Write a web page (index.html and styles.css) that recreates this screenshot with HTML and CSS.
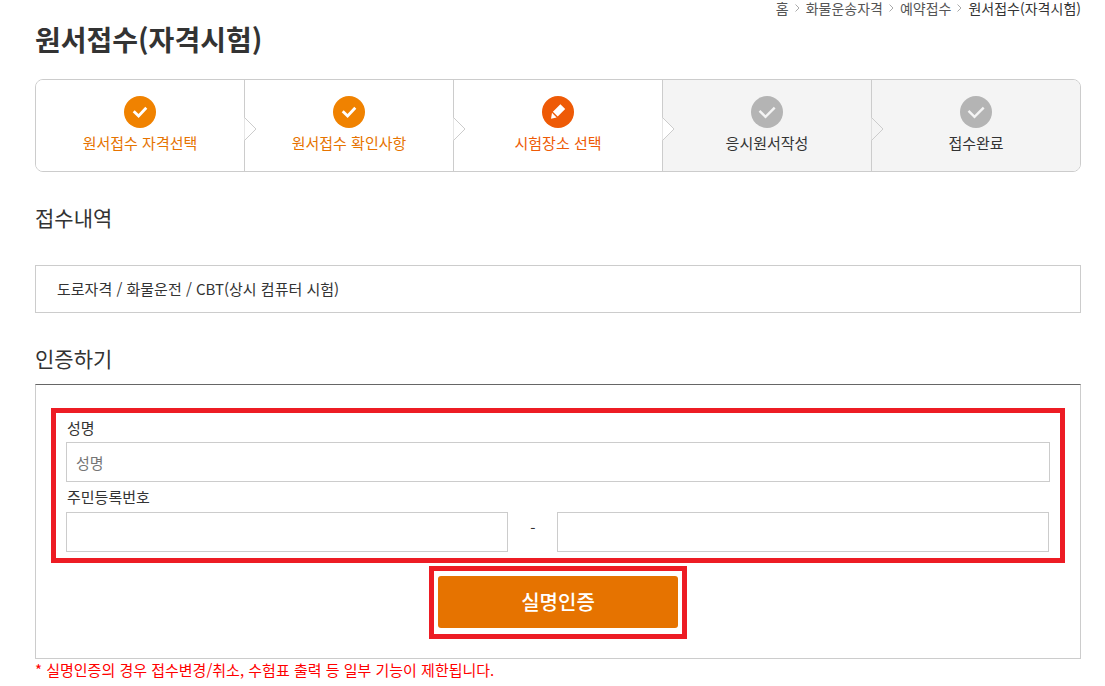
FILE: index.html
```
<!DOCTYPE html>
<html lang="ko">

<head>
    <meta charset="utf-8">
    <title>원서접수(자격시험)</title>
    <link rel="stylesheet" href="styles.css">
</head>

<body>
    <div class="container">
        <nav class="location">
            <a href="#">홈</a>
            <svg viewBox="0 0 5 8"><path d="M.5 .5L4 4L.5 7.5" /></svg>
            <a href="#">화물운송자격</a>
            <svg viewBox="0 0 5 8"><path d="M.5 .5L4 4L.5 7.5" /></svg>
            <a href="#">예약접수</a>
            <svg viewBox="0 0 5 8"><path d="M.5 .5L4 4L.5 7.5" /></svg>
            <a href="#" class="current">원서접수(자격시험)</a>
        </nav>

        <h1>원서접수(자격시험)</h1>

        <ol class="steps">
            <li class="done">
                <svg class="icon" viewBox="0 0 32 32"><circle cx="16" cy="16" r="16" /><path d="M9.7 15.2L14.6 20L22.3 11.8" /></svg>
                <span>원서접수 자격선택</span>
                <svg class="arrow" viewBox="0 0 13 24"><path d="M.5 .5L12 12L.5 23.5" /></svg>
            </li>
            <li class="done">
                <svg class="icon" viewBox="0 0 32 32"><circle cx="16" cy="16" r="16" /><path d="M9.7 15.2L14.6 20L22.3 11.8" /></svg>
                <span>원서접수 확인사항</span>
                <svg class="arrow" viewBox="0 0 13 24"><path d="M.5 .5L12 12L.5 23.5" /></svg>
            </li>
            <li class="on">
                <svg class="icon" viewBox="0 0 32 32"><circle cx="16" cy="16" r="16" /><path class="pen" d="M18.4 8.2L23.2 13L15.7 20.4L10.9 15.7ZM10 16.8L14.6 21.4L9 22.8Z" /></svg>
                <span>시험장소 선택</span>
                <svg class="arrow" viewBox="0 0 13 24"><path d="M.5 .5L12 12L.5 23.5" /></svg>
            </li>
            <li>
                <svg class="icon" viewBox="0 0 32 32"><circle cx="16" cy="16" r="16" /><path d="M8.5 14.8L14.5 20.8L23.7 11.6" /></svg>
                <span>응시원서작성</span>
                <svg class="arrow" viewBox="0 0 13 24"><path d="M.5 .5L12 12L.5 23.5" /></svg>
            </li>
            <li>
                <svg class="icon" viewBox="0 0 32 32"><circle cx="16" cy="16" r="16" /><path d="M8.5 14.8L14.5 20.8L23.7 11.6" /></svg>
                <span>접수완료</span>
            </li>
        </ol>

        <h2>접수내역</h2>
        <p class="summary">도로자격 / 화물운전 / CBT(상시 컴퓨터 시험)</p>

        <h2>인증하기</h2>
        <form class="certify">
            <div class="fields">
                <label for="name">성명</label>
                <input type="text" id="name" placeholder="성명">
                <label for="jumin1">주민등록번호</label>
                <div class="jumin">
                    <input type="text" id="jumin1" maxlength="6">
                    <span>-</span>
                    <input type="password" id="jumin2" maxlength="7" aria-label="주민등록번호 뒷자리">
                </div>
            </div>
            <div class="submit">
                <button type="submit">실명인증</button>
            </div>
        </form>
        <p class="notice">* 실명인증의 경우 접수변경/취소, 수험표 출력 등 일부 기능이 제한됩니다.</p>
    </div>
</body>

</html>
```
FILE: styles.css
```
* {
    box-sizing: border-box;
}

body {
    margin: 0;
    background: #fff;
    color: #333;
    font-family: 'Noto Sans CJK KR', sans-serif;
    font-size: 15px;
    line-height: 24px;
}

h1,
h2,
p,
ol {
    margin: 0;
    padding: 0;
}

.container {
    padding: 0 24px 0 35px;
}

.location {
    display: flex;
    justify-content: flex-end;
    align-items: center;
    gap: 6px;
    height: 16px;
    font-size: 14px;
}

.location a {
    color: #555;
    text-decoration: none;
}

.location a.current {
    color: #333;
}

.location svg {
    width: 5px;
    height: 8px;
    fill: none;
    stroke: #aaa;
}

h1 {
    font-size: 28px;
    line-height: 46px;
    font-weight: 700;
}

/* 진행 단계 */
.steps {
    display: flex;
    margin: 17px 0 23px;
    list-style: none;
    border: 1px solid #ccc;
    border-radius: 8px;
}

.steps li {
    position: relative;
    flex: 1;
    display: flex;
    flex-direction: column;
    align-items: center;
    gap: 3px;
    padding: 16px 0;
    background: #f4f4f4;
    border-right: 1px solid #ccc;
}

.steps li:first-child {
    border-radius: 7px 0 0 7px;
}

.steps li:last-child {
    border-right: none;
    border-radius: 0 7px 7px 0;
}

.steps .done,
.steps .on {
    background: #fff;
}

.steps .done {
    color: #e67300;
}

.steps .on {
    color: #ee5a06;
}

.icon {
    width: 32px;
    height: 32px;
}

.icon circle {
    fill: #b4b4b4;
}

.icon path {
    fill: none;
    stroke: #f4f4f4;
    stroke-width: 2.4;
}

.done .icon circle {
    fill: #f08200;
}

.done .icon path {
    stroke: #fff;
    stroke-width: 2.8;
}

.on .icon circle {
    fill: #ee5a06;
}

.icon .pen {
    fill: #fff;
    stroke: none;
}

/* 구분선 위에 겹치는 화살표 */
.arrow {
    position: absolute;
    top: 37px;
    right: -13px;
    z-index: 1;
    width: 13px;
    height: 24px;
    fill: #fff;
    stroke: #ccc;
}

.steps li:nth-child(4) .arrow {
    fill: #f4f4f4;
}

h2 {
    font-size: 21px;
    line-height: 44px;
    font-weight: 400;
}

.summary {
    margin: 26px 0 23px;
    padding: 11px 21px;
    border: 1px solid #ccc;
}

.certify {
    margin-top: 4px;
    padding: 23px 15px 19px;
    border: 1px solid #ccc;
    border-top-color: #666;
}

.fields {
    padding: 0 10px 6px;
    border: 5px solid #ed1c24;
}

.fields label {
    display: block;
    padding-left: 1px;
    line-height: 29px;
}

input {
    display: block;
    width: 100%;
    height: 40px;
    padding: 0 9px;
    border: 1px solid #ccc;
    border-radius: 0;
    background: #fff;
    color: #333;
    font: inherit;
}

input::placeholder {
    color: #757575;
}

.jumin {
    display: grid;
    grid-template-columns: 9fr 49px 10fr;
    padding: 1px 1px 0 0;
}

.jumin span {
    line-height: 32px;
    text-align: center;
}

.submit {
    width: 258px;
    margin: 3px auto 0;
    padding: 5px 4px 6px;
    border: 5px solid #ed1c24;
}

button {
    display: block;
    width: 100%;
    height: 52px;
    border: none;
    border-radius: 3px;
    background: #e67300;
    color: #fff;
    font: inherit;
    font-size: 20px;
    font-weight: 500;
}

.notice {
    color: #f00;
    line-height: 22px;
}
```
